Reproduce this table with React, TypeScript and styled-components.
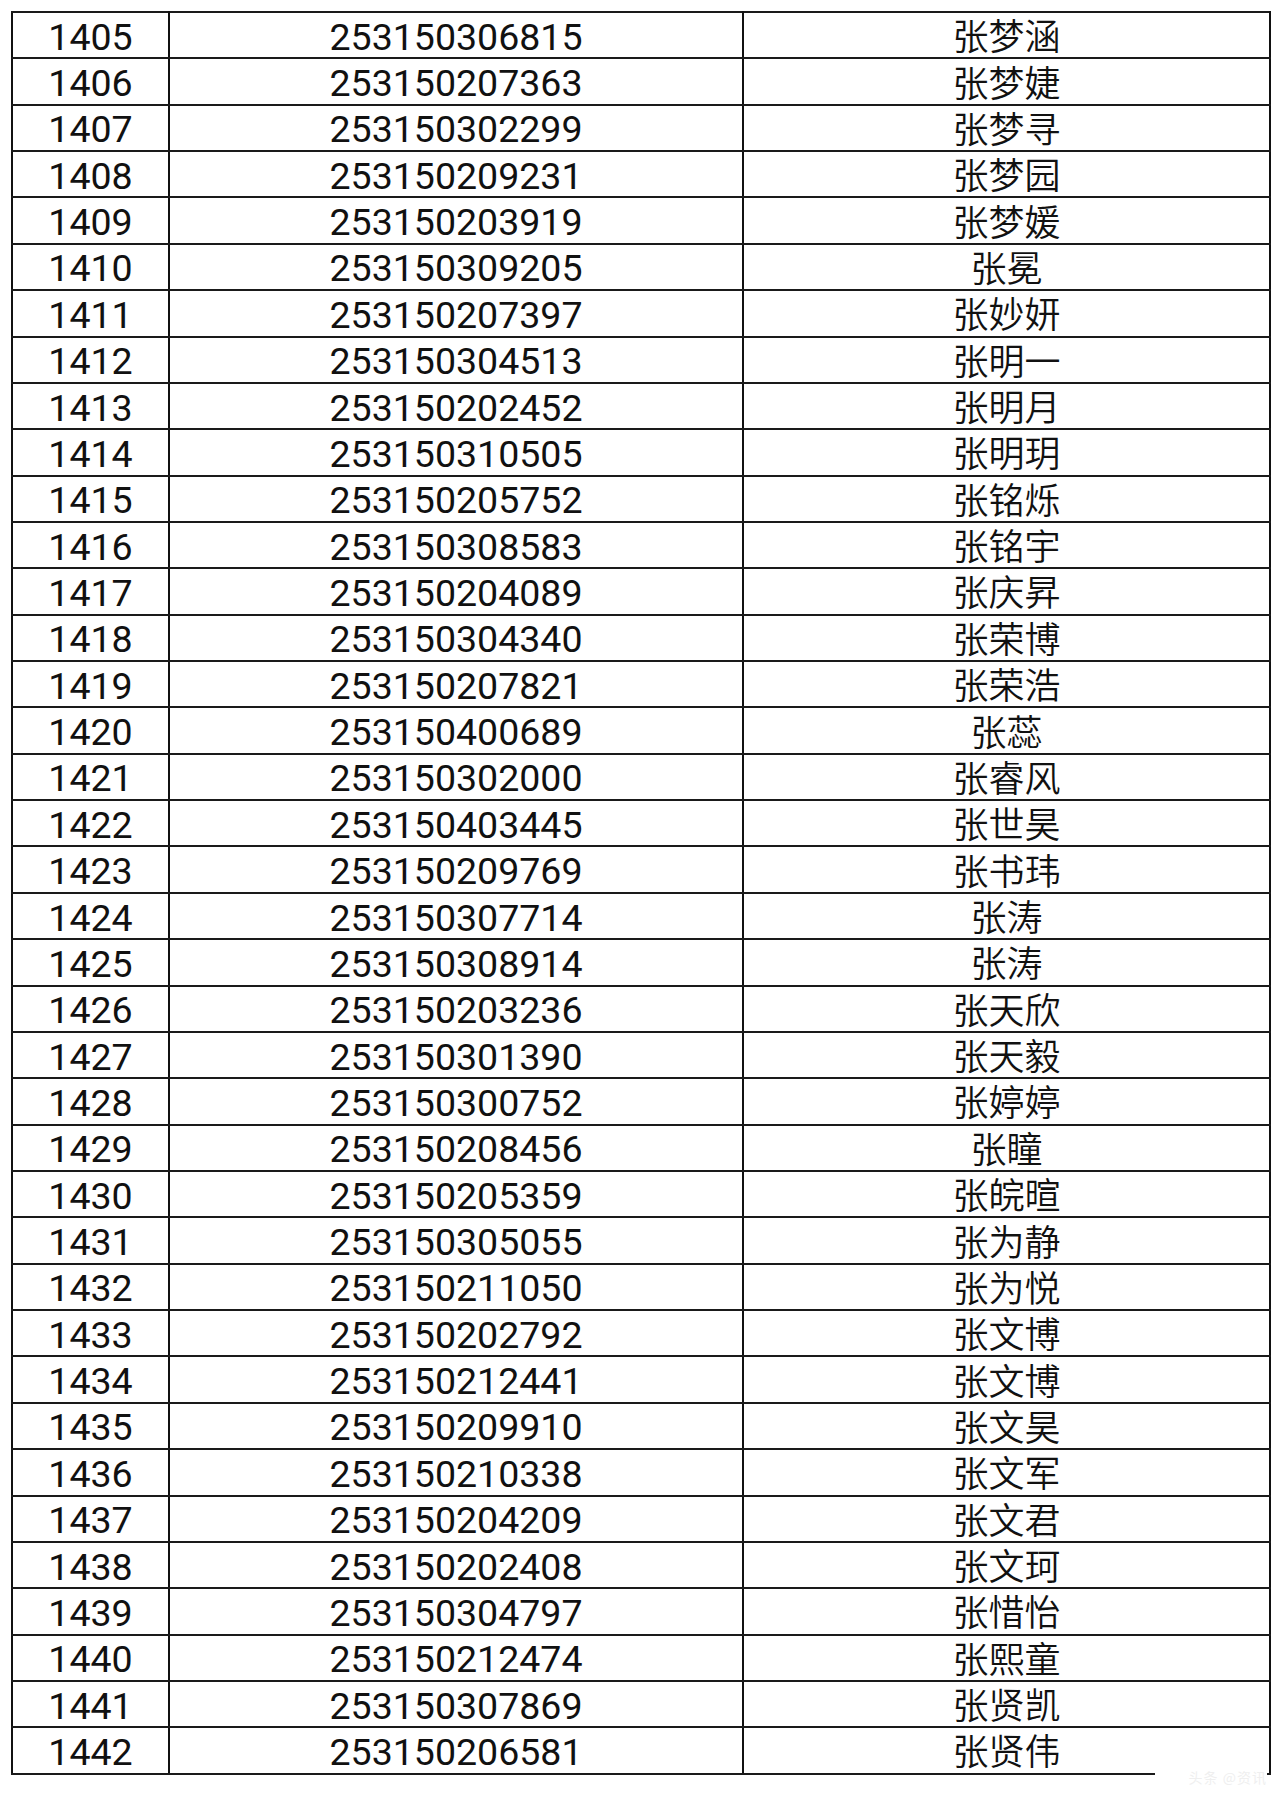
import styled, { createGlobalStyle } from 'styled-components';

const GlobalStyle = createGlobalStyle`
  html, body {
    margin: 0;
    padding: 0;
    background: #ffffff;
  }
`;

const Page = styled.div`
  padding: 11px 0 0 11px;
  width: 1280px;
  min-height: 1800px;
  box-sizing: border-box;
  background: #ffffff;
`;

const Sheet = styled.div`
  position: relative;
  width: 1258px;
`;

const Table = styled.table`
  width: 1258px;
  border-collapse: collapse;
  table-layout: fixed;
  border: 2px solid #111;
`;

const Row = styled.tr`
  height: 46.37px;
`;

const Cell = styled.td`
  padding: 0;
  border-left: 2px solid #111;
  border-right: 2px solid #111;
  border-top: 2px solid #1a1a1a;
  border-bottom: 2px solid #1a1a1a;
  text-align: center;
  vertical-align: middle;
  color: #111;
  white-space: nowrap;
`;

const Num = styled.span`
  display: inline-block;
  font-family: Roboto, "Noto Sans", sans-serif;
  font-size: 37.5px;
  line-height: 38px;
  height: 38px;
  padding-top: 3px;
`;

const Name = styled.span`
  display: inline-block;
  font-family: "Noto Sans CJK SC", "Noto Sans", sans-serif;
  font-size: 36px;
  font-weight: 350;
  line-height: 38px;
  height: 38px;
  padding-bottom: 2px;
`;

const Watermark = styled.span`
  position: absolute;
  right: 2px;
  bottom: -12px;
  width: 112px;
  height: 20px;
  background: #ffffff;
  color: #efefef;
  font-family: "Noto Sans CJK SC", sans-serif;
  font-size: 14px;
  line-height: 20px;
  text-align: right;
  letter-spacing: 1px;
`;

const rows: [string, string, string][] = [
  ['1405', '253150306815', '张梦涵'],
  ['1406', '253150207363', '张梦婕'],
  ['1407', '253150302299', '张梦寻'],
  ['1408', '253150209231', '张梦园'],
  ['1409', '253150203919', '张梦媛'],
  ['1410', '253150309205', '张冕'],
  ['1411', '253150207397', '张妙妍'],
  ['1412', '253150304513', '张明一'],
  ['1413', '253150202452', '张明月'],
  ['1414', '253150310505', '张明玥'],
  ['1415', '253150205752', '张铭烁'],
  ['1416', '253150308583', '张铭宇'],
  ['1417', '253150204089', '张庆昇'],
  ['1418', '253150304340', '张荣博'],
  ['1419', '253150207821', '张荣浩'],
  ['1420', '253150400689', '张蕊'],
  ['1421', '253150302000', '张睿风'],
  ['1422', '253150403445', '张世昊'],
  ['1423', '253150209769', '张书玮'],
  ['1424', '253150307714', '张涛'],
  ['1425', '253150308914', '张涛'],
  ['1426', '253150203236', '张天欣'],
  ['1427', '253150301390', '张天毅'],
  ['1428', '253150300752', '张婷婷'],
  ['1429', '253150208456', '张瞳'],
  ['1430', '253150205359', '张皖暄'],
  ['1431', '253150305055', '张为静'],
  ['1432', '253150211050', '张为悦'],
  ['1433', '253150202792', '张文博'],
  ['1434', '253150212441', '张文博'],
  ['1435', '253150209910', '张文昊'],
  ['1436', '253150210338', '张文军'],
  ['1437', '253150204209', '张文君'],
  ['1438', '253150202408', '张文珂'],
  ['1439', '253150304797', '张惜怡'],
  ['1440', '253150212474', '张熙童'],
  ['1441', '253150307869', '张贤凯'],
  ['1442', '253150206581', '张贤伟'],
];

export default function App() {
  return (
    <>
      <GlobalStyle />
      <Page>
        <Sheet>
          <Table>
            <colgroup>
              <col style={{ width: 157 }} />
              <col style={{ width: 574 }} />
              <col style={{ width: 527 }} />
            </colgroup>
            <tbody>
              {rows.map(([no, id, name]) => (
                <Row key={no}>
                  <Cell>
                    <Num>{no}</Num>
                  </Cell>
                  <Cell>
                    <Num>{id}</Num>
                  </Cell>
                  <Cell>
                    <Name>{name}</Name>
                  </Cell>
                </Row>
              ))}
            </tbody>
          </Table>
          <Watermark>头条 @资讯</Watermark>
        </Sheet>
      </Page>
    </>
  );
}
